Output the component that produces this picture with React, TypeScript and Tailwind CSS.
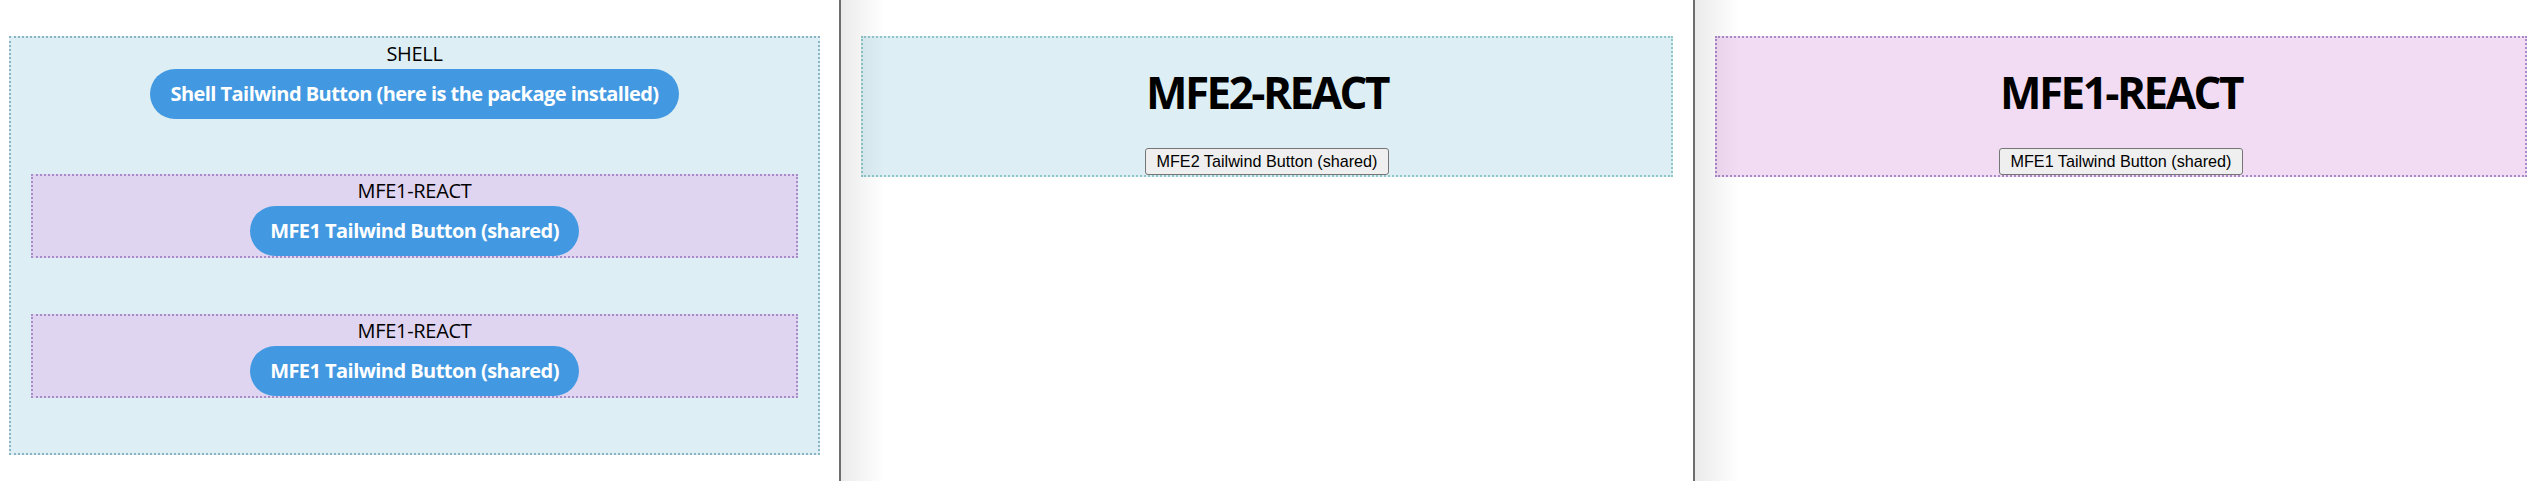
import React from "react";

const ui = { fontFamily: '"Open Sans", "Noto Sans", sans-serif' };
const arial = { fontFamily: '"Liberation Sans", Arial, sans-serif' };

function BlueButton({ children }: { children: React.ReactNode }) {
  return (
    <button
      className="h-[50px] rounded-full bg-[#4299e1] px-[20px] text-[20px] leading-[30px] font-bold tracking-[-0.55px] text-white"
      style={ui}
    >
      {children}
    </button>
  );
}

function InnerMfe1({ className }: { className: string }) {
  return (
    <div
      className={`mx-[20px] flex h-[84px] flex-col items-center border-2 border-dotted border-[#a88bc9] bg-[#dfd5f0] ${className}`}
    >
      <div className="h-[30px] text-[20px] leading-[30px] tracking-[-0.3px] text-black" style={ui}>
        MFE1-REACT
      </div>
      <BlueButton>MFE1 Tailwind Button (shared)</BlueButton>
    </div>
  );
}

function PlainButton({ children }: { children: React.ReactNode }) {
  return (
    <button
      className="h-[27px] rounded-[3px] border border-[#767676] bg-[#efefef] px-[10px] text-[16.2px] leading-[25px] text-black"
      style={arial}
    >
      {children}
    </button>
  );
}

function RemotePanel({
  title,
  button,
  bg,
  border,
  className,
}: {
  title: string;
  button: string;
  bg: string;
  border: string;
  className: string;
}) {
  return (
    <div className={`relative h-full bg-white pt-[36px] pl-[20px] ${className}`}>
      <div
        className={`flex h-[141px] w-[812px] flex-col items-center border-2 border-dotted ${bg} ${border}`}
      >
        <h1
          className="mt-[32px] h-[44px] text-[44px] leading-[44px] font-bold tracking-[-2.5px] text-black"
          style={ui}
        >
          {title}
        </h1>
        <div className="mt-[34px]">
          <PlainButton>{button}</PlainButton>
        </div>
      </div>
      <div className="pointer-events-none absolute inset-y-0 left-0 w-[44px] bg-linear-to-r from-black/[0.08] to-transparent" />
    </div>
  );
}

export default function App() {
  return (
    <div className="flex h-[481px] w-[2536px] overflow-hidden bg-white">
      <div className="h-full w-[839px] shrink-0 bg-white pt-[36px] pl-[9px]">
        <div className="flex w-[811px] flex-col border-2 border-dotted border-[#8ab4c4] bg-[#ddeff5] pt-[1px] pb-[55px]">
          <div className="h-[30px] text-center text-[20px] leading-[30px] tracking-[-0.3px] text-black" style={ui}>
            SHELL
          </div>
          <div className="flex justify-center">
            <BlueButton>Shell Tailwind Button (here is the package installed)</BlueButton>
          </div>
          <InnerMfe1 className="mt-[55px]" />
          <InnerMfe1 className="mt-[56px]" />
        </div>
      </div>
      <div className="h-full w-[2px] shrink-0 bg-[#6d6d6d]" />
      <RemotePanel
        title="MFE2-REACT"
        button="MFE2 Tailwind Button (shared)"
        bg="bg-[#ddeff5]"
        border="border-[#8fc7c9]"
        className="w-[852px] shrink-0"
      />
      <div className="h-full w-[2px] shrink-0 bg-[#6d6d6d]" />
      <RemotePanel
        title="MFE1-REACT"
        button="MFE1 Tailwind Button (shared)"
        bg="bg-[#f2dcf4]"
        border="border-[#a88bc9]"
        className="flex-1"
      />
    </div>
  );
}
